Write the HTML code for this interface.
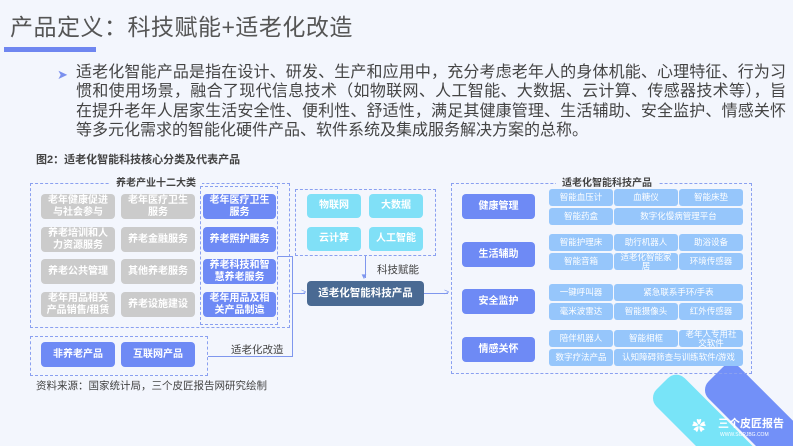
<!DOCTYPE html><html><head><meta charset="utf-8"><style>
*{margin:0;padding:0;box-sizing:border-box}
html{width:793px;height:446px;overflow:hidden}
body{width:793px;height:446px;overflow:hidden;background:#f3f6fd;font-family:"Liberation Sans","Noto Sans CJK SC",sans-serif;position:relative}
.a{position:absolute}
.b{position:absolute;display:flex;align-items:center;justify-content:center;text-align:center;color:#fff;border-radius:4px;line-height:1.15}
.g{background:#cbcbcb;font-size:10px;font-weight:bold;width:74px;height:25px}
.bl{background:#6e8af5;font-size:10px;font-weight:bold;width:73px;height:25px}
.t{background:#80e0f7;font-size:10px;font-weight:bold;width:54px;height:24px}
.p{background:#96c6fb;font-size:8.5px;height:17px;border-radius:3px}
.d{position:absolute;border:1px dashed #8aa0f0}
.ln{position:absolute;background:#7f97ee}
.pl{white-space:nowrap;text-align:justify;text-align-last:justify;width:710px;height:19.3px;overflow:hidden}
</style></head><body>
<svg class="a" style="left:0;top:0" width="793" height="446">
<rect x="0" y="0" width="40" height="140" rx="12" fill="#78e4f8" transform="translate(648,398) rotate(-45)"/>
<rect x="0" y="0" width="44" height="160" rx="12" fill="#7290f8" transform="translate(700,390) rotate(-45)"/>
</svg>
<div class="a" style="left:10px;top:8px;font-size:23px;color:#555;letter-spacing:0.5px">产品定义：科技赋能+适老化改造</div>
<div class="a" style="left:4px;top:47px;width:92px;height:5px;background:#6f86f0"></div>
<div class="a" style="left:57px;top:67px;color:#7b90ee;font-size:13px">➤</div>
<div class="a" style="left:76px;top:63px;font-size:16px;line-height:19.3px;color:#444">
<div class="pl">适老化智能产品是指在设计、研发、生产和应用中，充分考虑老年人的身体机能、心理特征、行为习</div>
<div class="pl">惯和使用场景，融合了现代信息技术（如物联网、人工智能、大数据、云计算、传感器技术等），旨</div>
<div class="pl">在提升老年人居家生活安全性、便利性、舒适性，满足其健康管理、生活辅助、安全监护、情感关怀</div>
<div style="white-space:nowrap">等多元化需求的智能化硬件产品、软件系统及集成服务解决方案的总称。</div>
</div>
<div class="a" style="left:36px;top:151px;font-size:11px;font-weight:bold;color:#444">图2：适老化智能科技核心分类及代表产品</div>

<div class="d" style="left:30px;top:183px;width:260px;height:145px"></div>
<div class="a" style="left:110px;top:174px;padding:0 6px;background:#f3f6fd;font-size:10px;font-weight:bold;color:#444">养老产业十二大类</div>
<div class="d" style="left:200px;top:186px;width:78px;height:139px"></div>
<div class="b g" style="left:41px;top:194px">老年健康促进<br>与社会参与</div>
<div class="b g" style="left:121px;top:194px">老年医疗卫生<br>服务</div>
<div class="b g" style="left:41px;top:227px">养老培训和人<br>力资源服务</div>
<div class="b g" style="left:121px;top:227px">养老金融服务</div>
<div class="b g" style="left:41px;top:259px">养老公共管理</div>
<div class="b g" style="left:121px;top:259px">其他养老服务</div>
<div class="b g" style="left:41px;top:292px">老年用品相关<br>产品销售/租赁</div>
<div class="b g" style="left:121px;top:292px">养老设施建设</div>
<div class="b bl" style="left:203px;top:194px">老年医疗卫生<br>服务</div>
<div class="b bl" style="left:203px;top:227px">养老照护服务</div>
<div class="b bl" style="left:203px;top:259px">养老科技和智<br>慧养老服务</div>
<div class="b bl" style="left:203px;top:292px">老年用品及相<br>关产品制造</div>
<div class="d" style="left:30px;top:336px;width:178px;height:40px"></div>
<div class="b bl" style="left:41px;top:342px;width:74px">非养老产品</div>
<div class="b bl" style="left:121px;top:342px;width:74px">互联网产品</div>
<div class="a" style="left:231px;top:342px;font-size:10.5px;color:#444">适老化改造</div>
<div class="ln" style="left:278px;top:256px;width:15px;height:1px"></div>
<div class="ln" style="left:292px;top:256px;width:1px;height:101px"></div>
<div class="ln" style="left:208px;top:356px;width:85px;height:1px"></div>
<div class="ln" style="left:293px;top:293px;width:12px;height:1px"></div>
<div class="a" style="left:301px;top:287px;color:#7f97ee;font-size:9px">&gt;</div>

<div class="d" style="left:295px;top:189px;width:141px;height:67px"></div>
<div class="b t" style="left:307px;top:194px">物联网</div>
<div class="b t" style="left:369px;top:194px">大数据</div>
<div class="b t" style="left:307px;top:227px">云计算</div>
<div class="b t" style="left:369px;top:227px">人工智能</div>
<div class="ln" style="left:365px;top:256px;width:1px;height:22px"></div>
<div class="a" style="left:360px;top:272px;color:#7f97ee;font-size:8px">▼</div>
<div class="a" style="left:377px;top:262px;font-size:10.5px;color:#444">科技赋能</div>
<div class="b" style="left:307px;top:281px;width:117px;height:25px;background:#4a6a93;font-size:10.5px;font-weight:bold">适老化智能科技产品</div>
<div class="ln" style="left:424px;top:293px;width:24px;height:1px"></div>
<div class="a" style="left:444px;top:287px;color:#7f97ee;font-size:9px">&gt;</div>

<div class="d" style="left:451px;top:183px;width:301px;height:191px"></div>
<div class="a" style="left:556px;top:174px;padding:0 6px;background:#f3f6fd;font-size:10px;font-weight:bold;color:#444">适老化智能科技产品</div>
<div class="b bl" style="left:462px;top:194px;height:25px">健康管理</div>
<div class="b bl" style="left:462px;top:242px;height:25px">生活辅助</div>
<div class="b bl" style="left:462px;top:289px;height:25px">安全监护</div>
<div class="b bl" style="left:462px;top:337px;height:25px">情感关怀</div>

<div class="b p" style="left:549px;top:189px;width:64px">智能血压计</div>
<div class="b p" style="left:614px;top:189px;width:64px">血糖仪</div>
<div class="b p" style="left:679px;top:189px;width:64px">智能床垫</div>
<div class="b p" style="left:549px;top:208px;width:64px">智能药盒</div>
<div class="b p" style="left:614px;top:208px;width:129px">数字化慢病管理平台</div>
<div class="b p" style="left:549px;top:234px;width:64px">智能护理床</div>
<div class="b p" style="left:614px;top:234px;width:64px">助行机器人</div>
<div class="b p" style="left:679px;top:234px;width:64px">助浴设备</div>
<div class="b p" style="left:549px;top:253px;width:64px">智能音箱</div>
<div class="b p" style="left:614px;top:253px;width:64px;line-height:1">适老化智能家<br>居</div>
<div class="b p" style="left:679px;top:253px;width:64px">环境传感器</div>
<div class="b p" style="left:549px;top:284px;width:64px">一键呼叫器</div>
<div class="b p" style="left:614px;top:284px;width:129px">紧急联系手环/手表</div>
<div class="b p" style="left:549px;top:303px;width:64px">毫米波雷达</div>
<div class="b p" style="left:614px;top:303px;width:64px">智能摄像头</div>
<div class="b p" style="left:679px;top:303px;width:64px">红外传感器</div>
<div class="b p" style="left:549px;top:330px;width:64px">陪伴机器人</div>
<div class="b p" style="left:614px;top:330px;width:64px">智能相框</div>
<div class="b p" style="left:679px;top:330px;width:64px;line-height:1">老年人专用社<br>交软件</div>
<div class="b p" style="left:549px;top:349px;width:64px">数字疗法产品</div>
<div class="b p" style="left:614px;top:349px;width:129px">认知障碍筛查与训练软件/游戏</div>

<div class="a" style="left:36px;top:378px;font-size:10.5px;color:#444">资料来源：国家统计局，三个皮匠报告网研究绘制</div>

<div class="a" style="left:718px;top:418px;font-size:11px;line-height:13px;color:#fff;font-weight:bold;white-space:nowrap">三个皮匠报告</div>
<div class="a" style="left:720px;top:432px;font-size:5px;line-height:6px;color:#fff;white-space:nowrap">WWW.SGPJBG.COM</div>
<div class="a" style="left:692px;top:418px;font-size:14px;line-height:16px;color:#fff">✿</div>
</body></html>
